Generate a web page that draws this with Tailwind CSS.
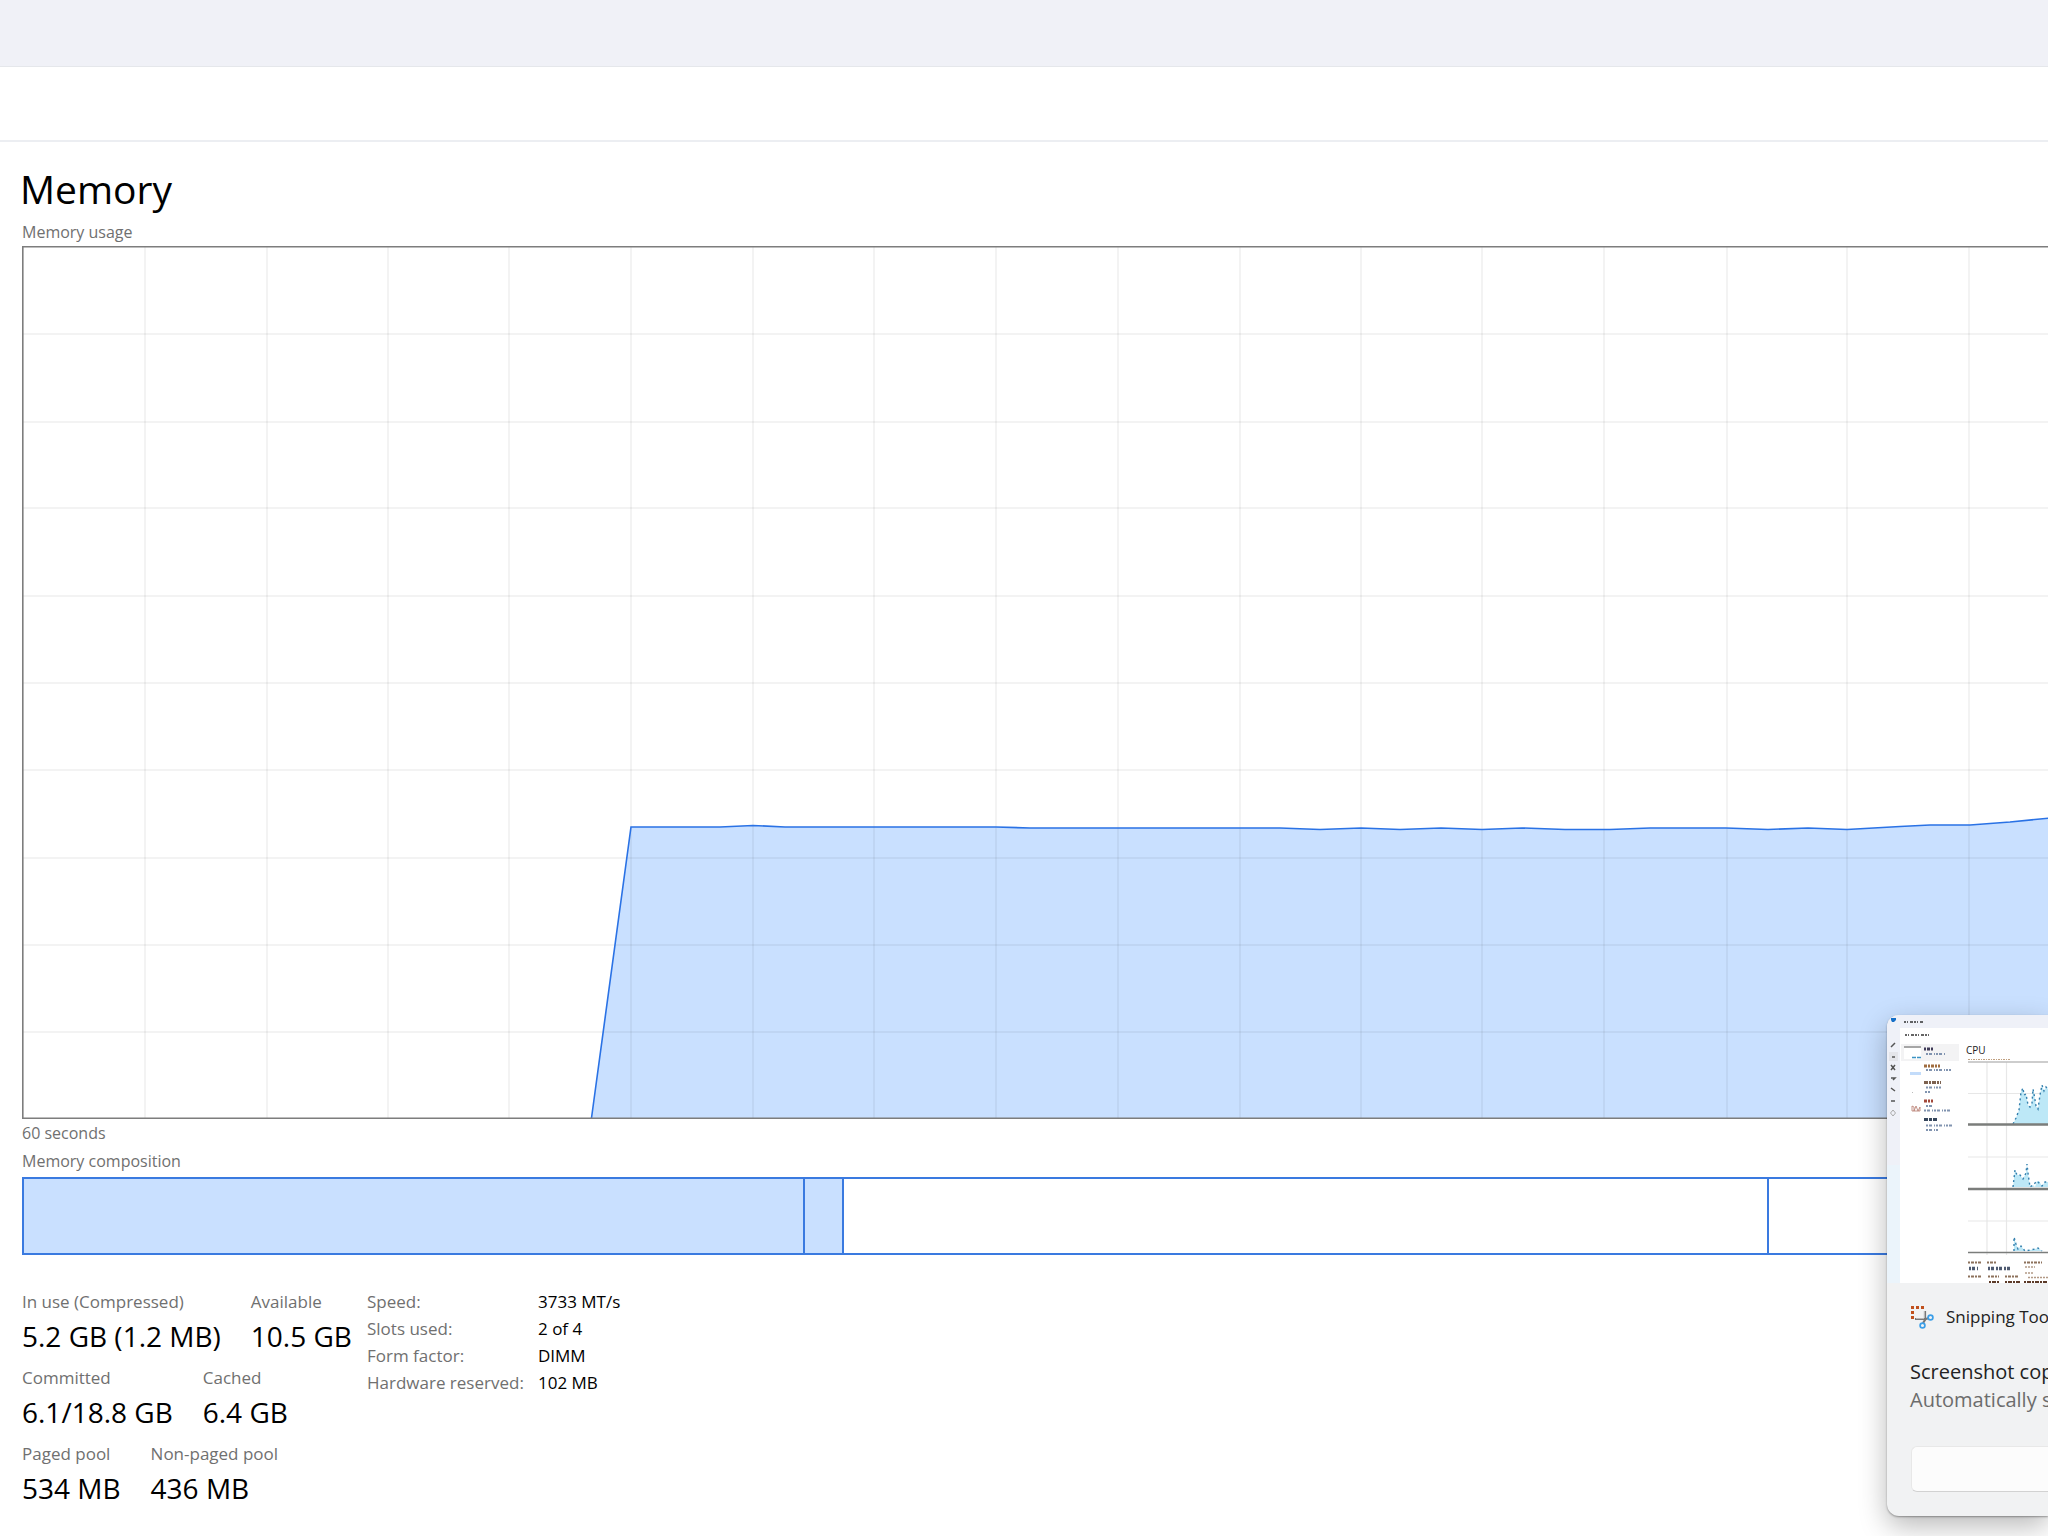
<!DOCTYPE html>
<html lang="en">
<head>
<meta charset="utf-8">
<meta name="viewport" content="width=device-width, initial-scale=1">
<title>Memory</title>
<script src="https://cdn.jsdelivr.net/npm/@tailwindcss/browser@4"></script>
</head>
<body class="bg-white">
<div class="relative min-h-screen overflow-hidden bg-white font-['Open_Sans','Noto_Sans',sans-serif] text-black">
  <header>
    <div class="h-[67px] border-b border-[#e5e7eb] bg-[#f0f1f7]"></div>
    <div class="h-[75px] border-b-2 border-[#eceef2]"></div>
  </header>

  <main class="pl-[22px] pt-[21px]">
    <h1 class="-ml-0.5 h-[57px] text-[39px] leading-[52px]">Memory</h1>
    <div class="h-[26px] text-[16px] leading-[24px] text-[#707070]">Memory usage</div>

    <svg class="block h-[873px] w-full" role="img" aria-label="Memory usage over 60 seconds">
      <path fill="#c9e0ff" d="M569.500 872L609 581H698L731 579.500L763 581H974L1008 582H1258L1298 583.500L1339 582L1378 583.500L1419 582L1460 583.500L1500 582L1543 583.500H1588L1628 582H1704L1746 583.500L1786 582L1825 583.500L1878 580.500L1908 579H1948L1988 576L2028 572L2400 560V872Z"/>
      <g stroke="#000" stroke-opacity=".065" stroke-width="1.500">
        <path d="M123 1V872M245 1V872M366 1V872M487 1V872M609 1V872M731 1V872M852 1V872M974 1V872M1096 1V872M1218 1V872M1339 1V872M1460 1V872M1582 1V872M1705 1V872M1825 1V872M1947 1V872"/>
        <path d="M1 88H2400M1 176H2400M1 262H2400M1 350H2400M1 437H2400M1 524H2400M1 612H2400M1 699H2400M1 786H2400"/>
      </g>
      <path fill="none" stroke="#2a72e5" stroke-width="1.600" d="M569.500 872L609 581H698L731 579.500L763 581H974L1008 582H1258L1298 583.500L1339 582L1378 583.500L1419 582L1460 583.500L1500 582L1543 583.500H1588L1628 582H1704L1746 583.500L1786 582L1825 583.500L1878 580.500L1908 579H1948L1988 576L2028 572"/>
      <path fill="none" stroke="#7d7d7d" stroke-width="1.600" d="M2400 .8H.8V872.200H2400"/>
    </svg>

    <div class="h-[28px] text-[16px] leading-[28px] text-[#707070]">60 seconds</div>
    <div class="h-[30px] text-[16px] leading-[28px] text-[#707070]">Memory composition</div>

    <div class="flex h-[78px] border-2 border-r-0 border-[#3a7ae0]">
      <div class="w-[781px] border-r-2 border-[#3a7ae0] bg-[#c9e0ff]"></div>
      <div class="w-[39px] border-r-2 border-[#3a7ae0] bg-[#c9e0ff]"></div>
      <div class="w-[925px] border-r-2 border-[#3a7ae0]"></div>
      <div class="grow"></div>
    </div>

    <div class="flex pt-[33px]">
      <div class="flex w-[345px] flex-col gap-2">
        <dl class="flex gap-[30px] whitespace-nowrap">
          <div><dt class="text-[17px] leading-[28px] text-[#707070]">In use (Compressed)</dt><dd class="text-[28px] leading-[40px]">5.2 GB (1.2 MB)</dd></div>
          <div><dt class="text-[17px] leading-[28px] text-[#707070]">Available</dt><dd class="text-[28px] leading-[40px]">10.5 GB</dd></div>
        </dl>
        <dl class="flex gap-[30px] whitespace-nowrap">
          <div><dt class="text-[17px] leading-[28px] text-[#707070]">Committed</dt><dd class="text-[28px] leading-[40px]">6.1/18.8 GB</dd></div>
          <div><dt class="text-[17px] leading-[28px] text-[#707070]">Cached</dt><dd class="text-[28px] leading-[40px]">6.4 GB</dd></div>
        </dl>
        <dl class="flex gap-[30px] whitespace-nowrap">
          <div><dt class="text-[17px] leading-[28px] text-[#707070]">Paged pool</dt><dd class="text-[28px] leading-[40px]">534 MB</dd></div>
          <div><dt class="text-[17px] leading-[28px] text-[#707070]">Non-paged pool</dt><dd class="text-[28px] leading-[40px]">436 MB</dd></div>
        </dl>
      </div>
      <table class="self-start whitespace-nowrap text-left text-[17px] leading-[27px]">
        <tbody>
          <tr><th scope="row" class="w-[171px] p-0 font-normal text-[#707070]">Speed:</th><td class="p-0">3733 MT/s</td></tr>
          <tr><th scope="row" class="p-0 font-normal text-[#707070]">Slots used:</th><td class="p-0">2 of 4</td></tr>
          <tr><th scope="row" class="p-0 font-normal text-[#707070]">Form factor:</th><td class="p-0">DIMM</td></tr>
          <tr><th scope="row" class="p-0 font-normal text-[#707070]">Hardware reserved:</th><td class="p-0">102 MB</td></tr>
        </tbody>
      </table>
    </div>
  </main>

  <!-- Notification -->
  <aside class="absolute right-0 top-[1015px] w-[161px] rounded-l-[12px] bg-[#f1f2f3] shadow-[0_10px_28px_rgba(0,0,0,0.28),0_1px_2px_rgba(0,0,0,0.35)]">
    <svg class="block h-[268px] w-full rounded-tl-[12px]" viewBox="0 0 161 268" aria-hidden="true">
      <path fill="#eff1f8" d="M0 0H161V268H0Z"/>
      <path fill="#ebf4fb" d="M0 150H13V268H0Z"/>
      <path fill="#fff" d="M13 13H161V268H13Z"/>
      <path fill="#1670c8" d="M4 3H9V5L7 7H5L4 5Z"/>
      <path fill="#e4e5ea" d="M2 37H11V46H2Z"/>
      <path stroke="#555" stroke-width="1.500" fill="none" d="M4 32L8 28M5 42H8M4 50L8 55M8 50L4 55M4 63H8L6 65M4 73L8 76M4 86H8"/>
      <path stroke="#aaa" fill="none" d="M6 95L8.500 98L6 101L3.500 98Z"/>
      <path stroke="#333" stroke-width="1.300" stroke-dasharray="2 1 1 2 3 1" d="M17 7H36M18 20H42"/>
      <path fill="#f3f3f4" d="M14 29H72V46H14Z"/>
      <path fill="#fff" d="M17 31H34V44H17Z"/>
      <path stroke="#888" stroke-width="1.600" d="M17 32H34"/>
      <path stroke="#3b93c4" stroke-width="1.600" stroke-dasharray="4 1" d="M25 42.500H34"/>
      <path fill="#c3dcfa" d="M23 57H34V60H23Z"/>
      <path fill="none" stroke="#b5796c" stroke-width=".8" d="M25 96V91L27 92V96L29 91L31 96L33 92V96Z"/>
      <path fill="#bbb" d="M25 77H26V78H25Z"/>
      <g stroke-width="2.800">
        <path stroke="#403b58" stroke-dasharray="2 1 3 1" d="M37 34H46"/>
        <path stroke="#a06d40" stroke-dasharray="3 1 2 1" d="M37 51H53"/>
        <path stroke="#7d6250" stroke-dasharray="4 1 2 1" d="M37 67.500H54"/>
        <path stroke="#a2483a" stroke-dasharray="3 1 2 1" d="M37 86H46"/>
        <path stroke="#36465c" stroke-dasharray="4 1 3 1" d="M37 104.500H50"/>
      </g>
      <g stroke="#8194b0" stroke-width="1.800" stroke-dasharray="2 1 3 2 1 1">
        <path d="M39 39H58M39 55H64M39 72.500H54M38 77H43M39 91H46M37 95.500H64M39 110.500H66M39 115H52"/>
      </g>
      <text x="79" y="39" font-size="10" fill="#222">CPU</text>
      <path stroke="#c0a080" stroke-width="1" stroke-dasharray="2 1 1 1" d="M81 44.500H123"/>
      <path stroke="#e7e7e7" stroke-width="1.200" d="M100 47V240M119.500 47V240M81 78.500H161M81 142H161M81 206H161"/>
      <path stroke="#bdbdbd" stroke-width="1.600" d="M81 47H161"/>
      <path fill="#bde8f7" d="M126 109L129 103L132 95L134 77L136 73L137 80L139 79L141 90L143 92L145 88L146 74L147 79L149 91L151 94L153 80L155 70L157 76L159 72L161 74V109Z"/>
      <path fill="none" stroke="#347fad" stroke-width="1.400" stroke-dasharray="2 3" d="M126 109L129 103L132 95L134 77L136 73L137 80L139 79L141 90L143 92L145 88L146 74L147 79L149 91L151 94L153 80L155 70L157 76L159 72L161 74"/>
      <path fill="#bde8f7" d="M126 172L128 155L130 160L133 160L136 164L139 158L140 149L141 158L143 172L146 170L148 172L150 166L152 166L155 171L158 167L161 167V172ZM127 236V222L129 229L131 234L134 231L138 236L148 234L151 233L155 236Z"/>
      <path fill="none" stroke="#347fad" stroke-width="1.400" stroke-dasharray="2 3" d="M126 172L128 155L130 160L133 160L136 164L139 158L140 149L141 158L143 172L146 170L150 166L155 171L158 167L161 167M127 236V222L129 229L131 234L134 231L138 236L148 234L151 233L155 236"/>
      <path stroke="#7b7d7b" stroke-width="2.300" d="M81 109.500H161M81 174H161"/>
      <path stroke="#7b7d7b" stroke-width="1.300" d="M81 237.500H161"/>
      <path stroke="#8d725c" stroke-width="2" stroke-dasharray="2 1 3 1" d="M81 247.500H95M100 247.500H109M137 247.500H155M81 261.500H95M101 261.500H112M118 261.500H131"/>
      <path stroke="#4e5a70" stroke-width="3.600" stroke-dasharray="2 1 3 2" d="M82 253.500H91M101 253.500H124"/>
      <path stroke="#b39a86" stroke-width="1.600" stroke-dasharray="2 1" d="M138 252H148M138 258H146M141 262.500H161"/>
      <path stroke="#5c3a28" stroke-width="2" stroke-dasharray="2 1 4 1" d="M102 267H113M118 267H134M137 267H161"/>
    </svg>
    <div class="flex flex-col overflow-hidden whitespace-nowrap pl-[23px] pt-[19px] text-[#222]">
      <div class="flex h-[30px] items-center gap-[12px] text-[17px]">
        <svg class="size-6 shrink-0" viewBox="0 0 24 24" fill="none" aria-hidden="true">
          <path fill="#c0501c" d="M1 1h3v3H1zM6 1h3v3H6zM11 1h3v3h-3zM1 6h3v3H1zM1 11h3v3H1z"/>
          <path stroke="#777" stroke-width="2.200" d="M5 14H16L19 13M15 6V15L13 18"/>
          <path stroke="#b7b7b7" d="M6 13.500H14M14.500 6V13"/>
          <circle cx="20.500" cy="12.500" r="2.400" stroke="#3c9fe8" stroke-width="1.700"/>
          <circle cx="12.500" cy="20.500" r="2.400" stroke="#3c9fe8" stroke-width="1.700"/>
        </svg>
        <span>Snipping Tool</span>
      </div>
      <p class="mt-[26px] text-[20px] leading-[28px]">Screenshot copied</p>
      <p class="text-[20px] leading-[28px] text-[#6c6c6c]">Automatically saved</p>
      <button type="button" aria-label="Mark up and share" class="mb-[24px] ml-[1px] mt-[32px] h-[46px] rounded-l-[6px] border border-r-0 border-[#e8e8e8] border-b-[#d2d2d2] bg-[#fcfcfc]"></button>
    </div>
  </aside>
</div>
</body>
</html>
